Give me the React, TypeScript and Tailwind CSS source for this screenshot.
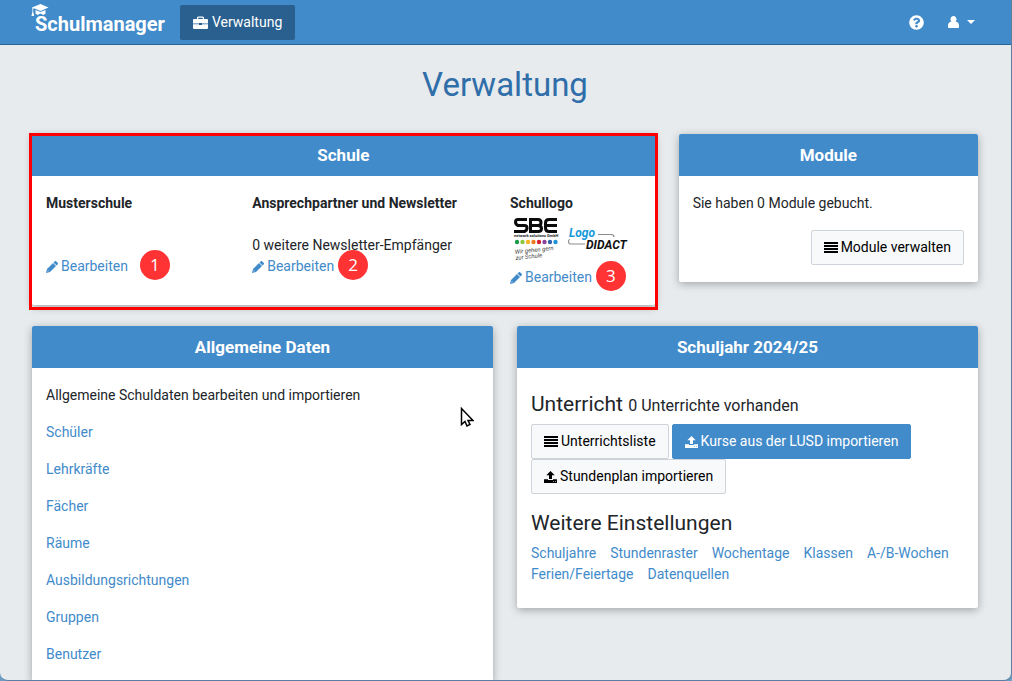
import React from "react";
import { FaQuestionCircle } from "react-icons/fa";

// icons

const GraduationCapIcon = () => (
  <svg
    className="absolute -top-2 -left-1 h-[15px] w-[18px]"
    viewBox="0 0 18 15"
    fill="currentColor"
    aria-hidden="true"
  >
    <path d="M9.500 0 17.500 3.500 9.500 7 3 4.200 2.200 5v3l1 4H.4l1-4V4.500L1 3.500Z" />
    <path d="M4.500 6 9.500 8 14.500 6v3.500L12.500 11 9.500 9.500 6.500 11 4.500 9.500Z" />
  </svg>
);

const BriefcaseIcon = () => (
  <svg className="h-[13px] w-[15px]" viewBox="0 0 15 13" fill="currentColor" aria-hidden="true">
    <path
      fillRule="evenodd"
      d="M4 3V1.500L5 .5h5l1 1V3h3a1 1 0 0 1 1 1v3.500H9V7H6v.5H0V4a1 1 0 0 1 1-1ZM5.200 3h4.600V1.800H5.200Z"
    />
    <path d="M0 8.300h6V9h3v-.7h6V12a1 1 0 0 1-1 1H1a1 1 0 0 1-1-1Z" />
  </svg>
);

const UserIcon = () => (
  <svg className="h-3 w-[11px]" viewBox="0 0 11 12" fill="currentColor" aria-hidden="true">
    <path d="M5.500 0C7.300 0 8.500 1.300 8.500 3.200 8.500 4.500 8 5.300 7.600 5.800 9.600 6 11 7.200 11 9.500V11c0 .6-.4 1-1 1H1c-.6 0-1-.4-1-1V9.500C0 7.200 1.400 6 3.400 5.800 3 5.300 2.500 4.500 2.500 3.200 2.500 1.300 3.700 0 5.500 0Z" />
  </svg>
);

const PencilIcon = () => (
  <svg className="size-3" viewBox="0 0 12 12" fill="currentColor" aria-hidden="true">
    <path d="M8.600.4a1.200 1.200 0 0 1 1.700 0l1.300 1.300a1.200 1.200 0 0 1 0 1.700l-1.100 1.100L7.500 1.500Z" />
    <path
      fillRule="evenodd"
      d="M7 2 10 5 4 11 0 12 1 8ZM1.900 9.200 1.500 10.500 2.800 10.100Z"
    />
  </svg>
);

const ListIcon = () => (
  <svg className="h-[11px] w-3.5" viewBox="0 0 14 11" fill="currentColor" aria-hidden="true">
    <path d="M0 0h14v2H0ZM0 3h14v2H0ZM0 6h14v2H0ZM0 9h14v2H0Z" />
  </svg>
);

const UploadIcon = () => (
  <svg className="h-3 w-[13px]" viewBox="0 0 13 12" fill="currentColor" aria-hidden="true">
    <path d="M6.500 0l4.200 4.200H8V8H5V4.200H2.300Z" />
    <path d="M0 8.300h4V9h5v-.7h4V12H0ZM9 10.200v.8h.8v-.8Zm2 0v.8h.8v-.8Z" fillRule="evenodd" />
  </svg>
);

const SchoolLogo = () => (
  <svg
    className="block h-[53px] w-[131px]"
    viewBox="0 0 131 53"
    role="img"
    aria-label="Schullogo"
  >
    <g fill="none" stroke="#0b0b0b" strokeWidth="3">
      <path d="M17 5.500H8Q5.500 5.500 5.500 8T8 11.500h6.500q2.500 0 2.500 2.500t-2.500 3.500H4" />
      <path d="M19 5.500h9q3 0 3 3t-3 3h-8.500M28 11.500q3.500 0 3.500 3t-3.500 3h-7.500V5.500" />
      <path d="M47 5.500H39Q35.500 5.500 35.500 9v5q0 3.500 3.500 3.500h8M36 11.500h11" />
    </g>
    <text x="4" y="23" fontSize="4" fontWeight="bold" fill="#222" className="font-['Roboto',sans-serif]">
      network solutions GmbH
    </text>
    <circle cx="7" cy="28" r="2.200" fill="#1a9a49" />
    <circle cx="12.500" cy="28" r="2.200" fill="#8cc63f" />
    <circle cx="18" cy="28" r="2.200" fill="#f5b324" />
    <circle cx="23.500" cy="28" r="2.200" fill="#ef7a24" />
    <circle cx="29" cy="28" r="2.200" fill="#d3202f" />
    <circle cx="34.500" cy="28" r="2.200" fill="#8d4198" />
    <circle cx="40" cy="28" r="2.200" fill="#2e62ad" />
    <circle cx="45.500" cy="28" r="2.200" fill="#1f93d6" />
    <g
      fontSize="6"
      fontStyle="italic"
      fill="#444"
      transform="rotate(-6 5 40)"
      className="font-['Roboto',sans-serif]"
    >
      <text x="5" y="40">Wir gehen gern</text>
      <text x="5" y="46">zur Schule</text>
    </g>
    <g fill="none" stroke="#8b8b8b" strokeWidth="1.200">
      <path d="M88 20.500h13q3 0 3 2.500" />
      <path d="M60 25.500q-1.500 0-1.500 2t1.500 2.500h15" />
    </g>
    <text
      x="59"
      y="23"
      fontSize="12"
      fontWeight="bold"
      fontStyle="italic"
      fill="#1499da"
      className="font-['Roboto',sans-serif]"
    >
      Logo
    </text>
    <text
      x="76"
      y="35"
      fontSize="12"
      fontWeight="bold"
      fontStyle="italic"
      fill="#111"
      className="font-['Roboto',sans-serif]"
    >
      DIDACT
    </text>
  </svg>
);

const MouseCursor = () => (
  <svg
    className="pointer-events-none absolute top-[407px] left-[460px] h-5 w-3.5"
    viewBox="0 0 14 20"
    aria-hidden="true"
  >
    <path
      d="M1.500 1.500v16l3.500-3 2 4.500 3-1.500-2-4h5Z"
      fill="#fff"
      stroke="#000"
      strokeWidth="1.500"
    />
  </svg>
);

// components

function Card({ title, className, children }: any) {
  return (
    <section
      className={`relative rounded-xs bg-white shadow-[0_2px_8px_rgba(0,0,0,0.3)] ${className}`}
    >
      <h2 className="rounded-t-xs bg-[#428bca] text-center text-[17px] leading-[42px] font-bold text-white">
        {title}
      </h2>
      <div className="px-3.5 py-[17px]">{children}</div>
    </section>
  );
}

function Button({ primary, children }: any) {
  return (
    <button
      type="button"
      className={`inline-flex h-[35px] items-center gap-[3px] rounded-xs border px-3 ${
        primary
          ? "border-[#428bca] bg-[#428bca] text-white"
          : "border-[#ced4da] bg-[#f8f9fa] text-black"
      }`}
    >
      {children}
    </button>
  );
}

function EditLink({ step, gap }: any) {
  return (
    <div className={`flex h-[21px] items-center ${gap}`}>
      <a href="#" className="flex items-center gap-[3px] text-[#428bca]">
        <PencilIcon />
        Bearbeiten
      </a>
      <span className="mb-1 flex size-[30px] shrink-0 items-center justify-center rounded-full bg-[#ff3333] font-['Open_Sans',sans-serif] text-[17px] text-white">
        {step}
      </span>
    </div>
  );
}

const generalLinks = [
  "Schüler",
  "Lehrkräfte",
  "Fächer",
  "Räume",
  "Ausbildungsrichtungen",
  "Gruppen",
  "Benutzer",
];

const settingLinks = [
  "Schuljahre",
  "Stundenraster",
  "Wochentage",
  "Klassen",
  "A-/B-Wochen",
  "Ferien/Feiertage",
  "Datenquellen",
];

export default function App() {
  return (
    <div className="h-screen overflow-hidden bg-[#6b9cc4] font-['Roboto',sans-serif] text-sm leading-[21px] text-[#212529]">
      <div className="relative h-full overflow-hidden rounded-b-lg border-r border-b border-[#5a7f9f] bg-[#e7ebee]">
        <nav className="flex h-[45px] items-center border-b border-[#2a6496] bg-[#428bca] px-8 text-white">
          <a href="#" className="relative mt-1 mr-[15px] ml-[3px] text-xl leading-6 font-bold">
            <GraduationCapIcon />
            Schulmanager
          </a>
          <a
            href="#"
            className="flex h-[35px] items-center gap-1 rounded-xs bg-[#2a6090] px-[13px]"
          >
            <BriefcaseIcon />
            Verwaltung
          </a>
          <div className="ml-auto flex items-center gap-6 pr-1">
            <a href="#" aria-label="Hilfe">
              <FaQuestionCircle className="size-[15px]" />
            </a>
            <button type="button" aria-label="Benutzerkonto" className="flex items-center gap-2">
              <UserIcon />
              <span className="border-x-4 border-t-4 border-x-transparent border-t-white" />
            </button>
          </div>
        </nav>

        <main className="pr-[33px] pl-8">
          <h1 className="pt-[19px] pb-7 text-center text-[33px] leading-[42px] text-[#2f6ea8]">
            Verwaltung
          </h1>

          <div className="grid grid-cols-12 items-start gap-x-6 gap-y-[21px]">
            <Card title="Schule" className="col-span-8">
              <div className="grid grid-cols-12 gap-x-6">
                <div className="col-span-4">
                  <h3 className="mb-[42px] font-bold">Musterschule</h3>
                  <EditLink step={1} gap="gap-3" />
                </div>
                <div className="col-span-5">
                  <h3 className="mb-[21px] font-bold">Ansprechpartner und Newsletter</h3>
                  <p>0 weitere Newsletter-Empfänger</p>
                  <EditLink step={2} gap="gap-1" />
                </div>
                <div className="col-span-3">
                  <h3 className="font-bold">Schullogo</h3>
                  <SchoolLogo />
                  <EditLink step={3} gap="gap-1" />
                </div>
              </div>
              {/* highlight frame */}
              <div className="pointer-events-none absolute -inset-x-[3px] -top-px -bottom-[5px] border-3 border-[#ff0000]" />
            </Card>

            <Card title="Module" className="col-span-4">
              <p>Sie haben 0 Module gebucht.</p>
              <div className="mt-4 flex justify-end">
                <Button>
                  <ListIcon />
                  Module verwalten
                </Button>
              </div>
            </Card>

            <Card title="Allgemeine Daten" className="col-span-6">
              <p>Allgemeine Schuldaten bearbeiten und importieren</p>
              <ul className="mt-4 flex flex-col gap-4">
                {generalLinks.map((name) => (
                  <li key={name}>
                    <a href="#" className="text-[#428bca]">{name}</a>
                  </li>
                ))}
              </ul>
            </Card>

            <Card title="Schuljahr 2024/25" className="col-span-6">
              <h3 className="mt-1.5 text-[21px] leading-[26px]">
                Unterricht <span className="text-base leading-none">0 Unterrichte vorhanden</span>
              </h3>
              <div className="mt-[7px] flex flex-wrap gap-x-[3px]">
                <Button>
                  <ListIcon />
                  Unterrichtsliste
                </Button>
                <Button primary>
                  <UploadIcon />
                  Kurse aus der LUSD importieren
                </Button>
                <Button>
                  <UploadIcon />
                  Stundenplan importieren
                </Button>
              </div>
              <h3 className="mt-4 mb-[7px] text-[21px] leading-[26px]">Weitere Einstellungen</h3>
              <div className="mb-1.5 flex flex-wrap gap-x-3.5">
                {settingLinks.map((name) => (
                  <a key={name} href="#" className="text-[#428bca]">{name}</a>
                ))}
              </div>
            </Card>
          </div>
        </main>

        <MouseCursor />
      </div>
    </div>
  );
}
